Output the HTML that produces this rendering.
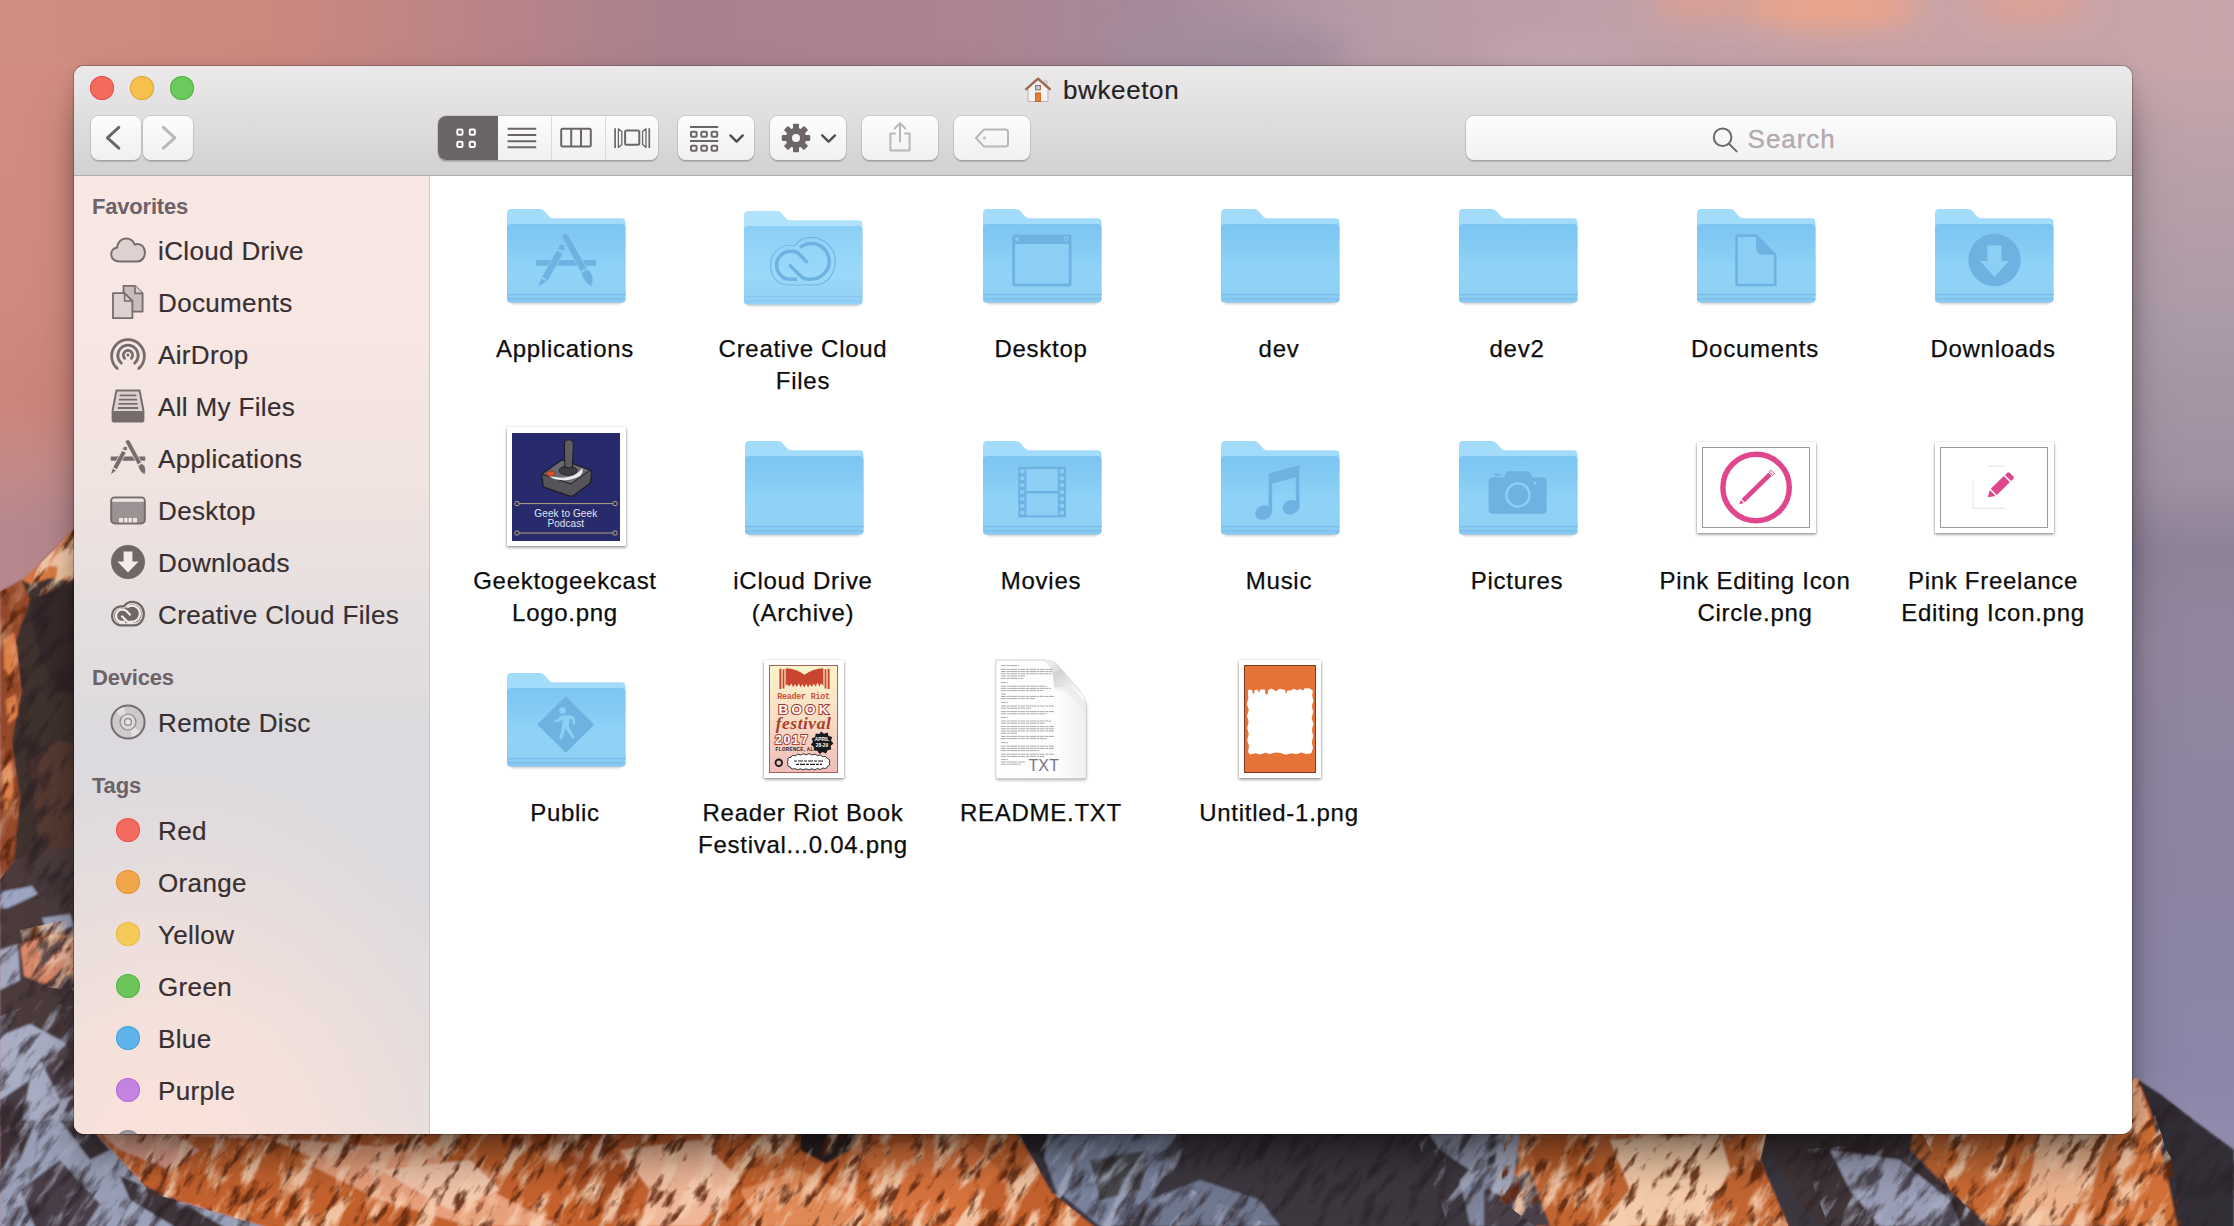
<!DOCTYPE html>
<html lang="en">
<head>
<meta charset="utf-8">
<title>bwkeeton</title>
<style>
html,body{margin:0;padding:0;}
body{width:2234px;height:1226px;overflow:hidden;position:relative;background:#b58a8e;font-family:"Liberation Sans",sans-serif;}
.wall{position:absolute;left:0;top:0;width:2234px;height:1226px;overflow:hidden;}
.win{position:absolute;left:74px;top:66px;width:2058px;height:1068px;border-radius:10px;overflow:hidden;box-shadow:0 0 0 1px rgba(0,0,0,.22),0 30px 42px -10px rgba(0,0,0,.5),0 4px 16px rgba(0,0,0,.14);background:#fff;}
.toolbar{position:absolute;left:0;top:0;width:2058px;height:109px;background:linear-gradient(#ebe9ea 0%,#e4e2e3 30%,#d2d0d2 100%);border-bottom:1px solid #aeabac;}
.sidebar{position:absolute;left:0;top:110px;width:355px;height:958px;border-right:1px solid #cdc8ca;background:radial-gradient(ellipse 340px 430px at 28% 106%,#fae2da 0%,rgba(250,226,218,.85) 35%,rgba(250,226,218,0) 100%),linear-gradient(180deg,#f9e7e3 0%,#f7e6e2 18%,#f0e3e0 33%,#e4dedf 47%,#dcdade 58%,#dcdade 72%,#e1dcdd 100%);overflow:hidden;}
.content{position:absolute;left:356px;top:110px;width:1702px;height:958px;background:#fff;overflow:hidden;}
.tl{position:absolute;top:10px;width:24px;height:24px;border-radius:50%;}
.title{position:absolute;left:950px;top:8.5px;height:30px;white-space:nowrap;}
.house{position:absolute;left:1px;top:2px;}
.ttext{-webkit-text-stroke:.2px #262224;position:absolute;left:39px;top:0;font-size:26px;line-height:30px;color:#262224;letter-spacing:.62px;}
.btn{position:absolute;top:50px;height:44px;border-radius:8px;background:linear-gradient(#fdfdfd,#f1f0f0);box-shadow:0 0 0 1px rgba(0,0,0,.09),0 1.5px 1px rgba(0,0,0,.16);}
.seg{position:absolute;top:50px;height:44px;border-radius:8px;background:linear-gradient(#fdfdfd,#f1f0f0);box-shadow:0 0 0 1px rgba(0,0,0,.09),0 1.5px 1px rgba(0,0,0,.16);overflow:hidden;}
.seg i{position:absolute;top:0;height:44px;display:block;}
.seg i.on{background:#6a6568;}
.seg i.dv{width:1px;background:#dcdadb;}
.search{position:absolute;left:1392px;top:50px;width:650px;height:44px;border-radius:8px;background:linear-gradient(#fcfcfc,#f3f2f2);box-shadow:0 0 0 1px rgba(0,0,0,.10),0 1.5px 1px rgba(0,0,0,.14);}
.stext{-webkit-text-stroke:.35px #b3aab0;position:absolute;left:281.6px;top:8.2px;font-size:26px;line-height:30px;color:#b3aab0;letter-spacing:.95px;}
.tbicons{position:absolute;left:0;top:0;}
.sh{position:absolute;left:18px;font-size:22px;line-height:26px;font-weight:bold;color:#6c6267;white-space:nowrap;letter-spacing:-.2px;}
.si{-webkit-text-stroke:.2px #372f32;position:absolute;left:84px;font-size:26px;line-height:30px;color:#372f32;white-space:nowrap;letter-spacing:.35px;}
.sic{position:absolute;left:36px;}
.dot{position:absolute;left:42px;width:24px;height:24px;border-radius:50%;display:block;}
.fi{position:absolute;}
.lb{-webkit-text-stroke:.25px #0c0c0c;position:absolute;width:260px;text-align:center;font-size:24px;line-height:32px;color:#0c0c0c;white-space:nowrap;letter-spacing:.72px;}
.th{position:absolute;background:#fff;box-shadow:0 0 0 .5px rgba(0,0,0,.12),0 1.5px 3px rgba(0,0,0,.42);}
.geek{position:absolute;left:4.8px;top:6px;width:108px;height:108px;background:#272a6b;overflow:hidden;}
.geek span{position:absolute;left:0;width:108px;text-align:center;color:#e2e5ef;font-size:10px;line-height:10px;letter-spacing:.1px;}
.geek .g1{top:76px}.geek .g2{top:86px}
.pinkin{position:absolute;left:4.6px;top:5.5px;width:106.4px;height:78.5px;border:1px solid #9a9a9a;background:#fff;overflow:hidden;}
.poster{position:absolute;left:5.5px;top:5.5px;width:67px;height:106px;border:1px solid #a8625a;background:linear-gradient(#fcf3cb,#f8e0c6 45%,#efbdbb);overflow:hidden;}
.poster span{position:absolute;white-space:nowrap;}
.poster .p1{left:0;width:67px;text-align:center;top:26.4px;font:bold 8.4px/10px "Liberation Mono",monospace;color:#c9553c;letter-spacing:-.25px;}
.poster .p2{left:0;width:67px;text-align:center;top:36.6px;font:bold 13.5px/14px "Liberation Sans",sans-serif;color:#fff;letter-spacing:3.2px;text-indent:3.2px;-webkit-text-stroke:2px #a3382a;paint-order:stroke fill;text-shadow:-1px 1.2px 0 #b8402e;}
.poster .p6{left:0;width:67px;text-align:center;top:48px;font:italic bold 17.5px/18px "Liberation Serif",serif;color:#a8402c;letter-spacing:.5px;}
.poster .p3{left:5px;top:68px;font:bold 12.5px/13px "Liberation Sans",sans-serif;color:#fff;letter-spacing:1.6px;-webkit-text-stroke:1.8px #a3382a;paint-order:stroke fill;text-shadow:-.8px 1px 0 #b8402e;}
.poster .p4{left:40.5px;width:23px;text-align:center;top:71.4px;font:bold 4.8px/5.8px "Liberation Sans",sans-serif;color:#fff;}
.poster .p5{left:5.6px;top:81.2px;font:bold 4.6px/6px "Liberation Sans",sans-serif;color:#1d1a1c;letter-spacing:.35px;}
.txtdoc{position:absolute;width:92px;height:119px;}
.txt{position:absolute;left:33.4px;top:97.2px;font-size:16px;line-height:18px;color:#77747f;letter-spacing:.2px;}
.orange{position:absolute;left:5px;top:5px;width:70.5px;height:106.5px;border:1px solid #7d3a1c;background:#e57338;overflow:hidden;}

</style>
</head>
<body>
<div class="wall">
<svg width="2234" height="1226" viewBox="0 0 2234 1226" style="position:absolute;left:0;top:0">
<defs>
<linearGradient id="skyx" x1="0" y1="0" x2="1" y2="0">
<stop offset="0" stop-color="#d28d81"/><stop offset=".12" stop-color="#cc887f"/><stop offset=".22" stop-color="#b98488"/><stop offset=".30" stop-color="#a9818e"/><stop offset=".42" stop-color="#ad8390"/><stop offset=".52" stop-color="#a58a9b"/><stop offset=".60" stop-color="#b59aa6"/><stop offset=".72" stop-color="#c0a0a8"/><stop offset=".86" stop-color="#c9a3a6"/><stop offset="1" stop-color="#c6a5aa"/>
</linearGradient>
<linearGradient id="lefty" x1="0" y1="0" x2="0" y2="1">
<stop offset="0" stop-color="#d28d81"/><stop offset=".2" stop-color="#d18a7d"/><stop offset=".29" stop-color="#cd857b"/><stop offset=".35" stop-color="#c38a88"/><stop offset=".4" stop-color="#b6888e"/><stop offset="1" stop-color="#b4868c"/>
</linearGradient>
<linearGradient id="righty" x1="0" y1="0" x2="0" y2="1">
<stop offset="0" stop-color="#c8a6aa"/><stop offset=".08" stop-color="#bba1a9"/><stop offset=".22" stop-color="#ac9ba8"/><stop offset=".36" stop-color="#9f90a2"/><stop offset=".42" stop-color="#8f8198"/><stop offset=".5" stop-color="#92869e"/><stop offset=".7" stop-color="#8d84a2"/><stop offset=".86" stop-color="#8b86a8"/><stop offset="1" stop-color="#9591b2"/>
</linearGradient>
<filter id="b1"><feGaussianBlur stdDeviation="1.2"/></filter>
<filter id="b14"><feGaussianBlur stdDeviation="14"/></filter>
<filter id="rock" x="0" y="0" width="100%" height="100%">
<feTurbulence type="fractalNoise" baseFrequency="0.07 0.03" numOctaves="4" seed="7" result="n"/>
<feColorMatrix in="n" type="matrix" values="0 0 0 0 0  0 0 0 0 0  0 0 0 0 0  4 0 0 0 -2.0" result="a"/>
<feFlood flood-color="#2c2126"/><feComposite in2="a" operator="in"/>
</filter>
<filter id="rockd" x="0" y="0" width="100%" height="100%">
<feTurbulence type="fractalNoise" baseFrequency="0.085 0.038" numOctaves="4" seed="11" result="n"/>
<feColorMatrix in="n" type="matrix" values="0 0 0 0 0  0 0 0 0 0  0 0 0 0 0  5 0 0 0 -2.75" result="a"/>
<feFlood flood-color="#5e2810"/><feComposite in2="a" operator="in"/>
</filter>
<filter id="rockl" x="0" y="0" width="100%" height="100%">
<feTurbulence type="fractalNoise" baseFrequency="0.055 0.024" numOctaves="4" seed="23" result="n"/>
<feColorMatrix in="n" type="matrix" values="0 0 0 0 0  0 0 0 0 0  0 0 0 0 0  0 4.2 0 0 -2.0" result="a"/>
<feFlood flood-color="#f7cfb0"/><feComposite in2="a" operator="in"/>
</filter>
<filter id="rocks" x="0" y="0" width="100%" height="100%">
<feTurbulence type="fractalNoise" baseFrequency="0.06 0.026" numOctaves="4" seed="41" result="n"/>
<feColorMatrix in="n" type="matrix" values="0 0 0 0 0  0 0 0 0 0  0 0 0 0 0  0 4 0 0 -2.1" result="a"/>
<feFlood flood-color="#a9afc4"/><feComposite in2="a" operator="in"/>
</filter>
<!-- orange-lit regions -->
<clipPath id="cl-or2"><path d="M0 592L22 580L30 600L16 640L22 690L12 740L20 800L14 860L0 880Z"/></clipPath>
<clipPath id="cl-or"><path d="M90 512L74 529L56 548L36 568L22 580L30 600L60 588L90 570ZM84 1120H1012L1052 1193L1100 1230H275L151 1193ZM1506 1120H1770L1760 1160L1790 1230H1540L1500 1200ZM1916 1120H2150L2172 1160L2182 1230H1990L1950 1190ZM2120 1092L2136 1077L2146 1088L2160 1130L2166 1150H2120ZM20 930L74 918V990L30 986Z"/></clipPath>
<!-- dark / snow regions -->
<clipPath id="cl-dk"><path d="M90 570L60 588L30 600L16 640L22 690L12 740L20 800L14 860L0 880V1230H275L151 1193L84 1120H90ZM1012 1120H1506L1500 1200L1540 1230H1100L1052 1193ZM1770 1120H1916L1950 1190L1990 1230H1790L1760 1160ZM2160 1130L2138 1080L2160 1094L2196 1122L2234 1150V1230H2182L2172 1160Z"/></clipPath>
<clipPath id="cl-snow"><path d="M0 1016L40 1000L90 1010V1120H84L151 1193L275 1230H0ZM1012 1120H1200L1170 1180L1280 1230H1100L1052 1193ZM1410 1120H1506L1500 1200L1540 1230H1450ZM1800 1150L1916 1140L1950 1190L1990 1230H1830Z"/></clipPath>
</defs>
<!-- sky: top strip -->
<rect x="0" y="0" width="2234" height="80" fill="url(#skyx)"/>
<g filter="url(#b14)"><ellipse cx="1830" cy="8" rx="90" ry="20" fill="#eea488"/><ellipse cx="1700" cy="4" rx="50" ry="12" fill="#e3a08c"/><ellipse cx="2030" cy="6" rx="60" ry="12" fill="#e5a08e"/><ellipse cx="1230" cy="50" rx="120" ry="24" fill="#a18c9e"/><ellipse cx="1560" cy="56" rx="80" ry="16" fill="#c3a6b0"/></g>
<rect x="0" y="60" width="90" height="1166" fill="url(#lefty)"/>
<rect x="2120" y="60" width="114" height="1166" fill="url(#righty)"/>
<!-- MOUNTAIN BASE SHAPES -->
<g filter="url(#b1)">
<!-- left mountain -->
<path d="M90 512L74 529L56 548L36 568L22 580L0 592V1230H90Z" fill="#40302f"/>
<path d="M90 512L74 529L56 548L36 568L22 580L30 584L50 578L70 580L90 570Z" fill="#d97a44"/>
<path d="M74 534L58 552L48 566L62 566L76 556Z" fill="#f6c6a2"/>
<path d="M0 592L22 580L30 600L16 640L22 690L12 740L20 800L14 860L0 880Z" fill="#96492a"/>
<path d="M4 640L14 632L18 660L10 676L4 668ZM6 700L16 694L18 716L8 724ZM2 770L12 760L14 800L4 812Z" fill="#dc7f48"/>
<path d="M30 600L60 588L90 576V700L60 690L40 660Z" fill="#37292c"/>
<path d="M30 760L60 740L90 750V870L40 860Z" fill="#553a33"/>
<path d="M0 880L14 860L40 850L90 846V1230H0Z" fill="#4b3a3e"/>
<path d="M0 892L32 886L38 894L8 908L0 908Z" fill="#9ea6c2"/>
<path d="M42 918L70 914L74 926L48 934Z" fill="#9aa0b8"/>
<path d="M20 944L50 934L74 936V972L44 984L24 976Z" fill="#d98a6c"/>
<path d="M36 946L66 940L70 958L44 966Z" fill="#efb4a2"/>
<path d="M0 950L18 944L20 980L0 990Z" fill="#a4a9c0"/>
<path d="M0 1036L30 1024L60 1040L90 1060V1120L50 1160L20 1226H0Z" fill="#a9aec4"/>
<path d="M40 1060L74 1040L90 1050V1090L60 1100Z" fill="#51424a"/>
<path d="M0 1100L30 1080L20 1130L0 1160Z" fill="#4a3d45"/>
<!-- bottom band -->
<path d="M84 1120H2150L2180 1230H275L151 1193Z" fill="#c4622f"/>
<path d="M0 1120H84L151 1193L275 1230H0Z" fill="#9aa0b8"/>
<path d="M0 1120H36L20 1160L0 1180Z" fill="#3f3339"/>
<path d="M60 1120H84L110 1150L90 1160Z" fill="#40343a"/>
<path d="M120 1176L170 1196L230 1230H180L130 1200Z" fill="#40343a"/>
<path d="M20 1190L60 1160L100 1204L84 1230H36Z" fill="#4a3e46"/>
<path d="M86 1120L150 1120L200 1150L170 1170L120 1150Z" fill="#dfa08e"/>
<path d="M150 1134L260 1134L340 1170L430 1190L410 1150L300 1140Z" fill="#efb294"/>
<path d="M300 1160L420 1140L470 1180L560 1226H470L380 1200Z" fill="#e9a07c"/>
<path d="M620 1150L700 1140L740 1180L700 1226H640L650 1190Z" fill="#f0b898"/>
<path d="M380 1170L470 1160L500 1190L450 1210Z" fill="#f2c4aa"/>
<path d="M520 1134L600 1134L640 1180L620 1226L580 1200L560 1160Z" fill="#a84e24"/>
<path d="M800 1120H866L850 1150L826 1164L800 1150Z" fill="#2b2024"/>
<path d="M860 1150L960 1134L1000 1170L960 1226H900L880 1190Z" fill="#d8733e"/>
<path d="M740 1190L800 1170L860 1200L880 1226H760Z" fill="#e08a58"/>
<path d="M1010 1120H2150L2180 1230H1098L1052 1193Z" fill="#3d393f"/>
<path d="M1030 1120H1190L1170 1160L1150 1200L1130 1226H1100L1056 1190Z" fill="#78829b"/>
<path d="M1010 1120H1050L1044 1160L1020 1140Z" fill="#2e2a30"/>
<path d="M1090 1160L1150 1150L1140 1190L1100 1200Z" fill="#4a4850"/>
<path d="M1150 1200L1200 1180L1260 1200L1280 1226H1140Z" fill="#70788f"/>
<path d="M1420 1120H1520L1500 1150L1470 1170L1440 1150Z" fill="#8c92a8"/>
<path d="M1460 1180L1500 1160L1520 1226H1470Z" fill="#7e8499"/>
<path d="M1506 1120H1770L1760 1160L1790 1230H1540L1500 1200L1520 1160Z" fill="#c26633"/>
<path d="M1610 1140L1720 1134L1730 1170L1700 1226H1600L1630 1190Z" fill="#f4cba8"/>
<path d="M1520 1140L1580 1134L1600 1170L1560 1190Z" fill="#b85c2c"/>
<path d="M1484 1190L1530 1170L1550 1226H1484Z" fill="#4a4048"/>
<path d="M1500 1134L1520 1134L1510 1200L1490 1190Z" fill="#a4a8bc"/>
<path d="M1760 1120H1924L1900 1150L1950 1190L1990 1226H1820L1790 1190Z" fill="#403639"/>
<path d="M1830 1150L1900 1160L1950 1200L1960 1226H1880L1850 1190Z" fill="#9a9eb6"/>
<path d="M1916 1120H2150L2170 1160L2180 1226H1990L1950 1190L1910 1150Z" fill="#c86a36"/>
<path d="M2040 1134L2110 1134L2090 1180L2060 1226H2010L2030 1180Z" fill="#eeb590"/>
<!-- right peak -->
<path d="M2120 1092L2136 1077L2146 1088L2160 1130L2176 1190L2184 1230H2120Z" fill="#d06f39"/>
<path d="M2138 1080L2160 1094L2196 1122L2234 1150V1230H2178L2166 1170L2150 1110Z" fill="#332d34"/>
<path d="M2124 1096L2140 1086L2150 1120L2130 1134Z" fill="#eaa880"/>
</g>
<!-- texture -->
<g clip-path="url(#cl-or)"><g transform="translate(0 500) skewX(-27)">
<rect x="0" y="0" width="2640" height="730" filter="url(#rockl)" opacity=".9"/>
<rect x="0" y="0" width="2640" height="730" filter="url(#rockd)" opacity=".85"/>
</g></g>
<g clip-path="url(#cl-or2)"><g transform="translate(0 500) skewX(-20)">
<rect x="0" y="0" width="300" height="400" filter="url(#rockl)" opacity=".3"/>
<rect x="0" y="0" width="300" height="400" filter="url(#rockd)" opacity=".9"/>
</g></g>
<g clip-path="url(#cl-snow)"><g transform="translate(0 500) skewX(-31)">
<rect x="0" y="0" width="2700" height="730" filter="url(#rocks)" opacity=".8"/>
</g></g>
<g clip-path="url(#cl-dk)"><g transform="translate(0 500) skewX(-31)">
<rect x="0" y="0" width="2700" height="730" filter="url(#rock)" opacity=".7"/>
</g></g>
</svg>

</div>
<div class="win">
<div class="toolbar">
<div class="tl" style="left:16px;background:#f46a5f;box-shadow:inset 0 0 0 1px #e2544a;"></div>
<div class="tl" style="left:56px;background:#f6c14f;box-shadow:inset 0 0 0 1px #e0a534;"></div>
<div class="tl" style="left:96px;background:#6cc95e;box-shadow:inset 0 0 0 1px #55b447;"></div>
<div class="title"><svg class="house" width="28" height="26" viewBox="0 0 28 26"><path d="M3 11.5 L3 24.5 L23 24.5 L23 11.5 L13 2.5 Z" fill="#f4f2f0" stroke="#b9b3ae" stroke-width="1"/><path d="M19 4 L22 4 L22 8 L19 6 Z" fill="#e4e2e2" stroke="#aaa" stroke-width=".6"/><path d="M1.2 12.2 L13 1.6 L24.8 12.2" fill="none" stroke="#9c6a50" stroke-width="2.4" stroke-linecap="round" stroke-linejoin="round"/><rect x="10.5" y="16" width="5" height="8.5" fill="#ea7a2c" stroke="#c05a18" stroke-width=".8"/><rect x="10.6" y="8.6" width="4.8" height="4.2" fill="#bcd2ea" stroke="#a0654a" stroke-width="1"/></svg><span class="ttext">bwkeeton</span></div>
<div class="btn" style="left:16.5px;width:50.5px;"></div>
<div class="btn" style="left:69px;width:49.5px;"></div>
<div class="seg" style="left:363.5px;width:220.5px;"><i class="on" style="left:0;width:60px;"></i><i class="dv" style="left:113px;"></i><i class="dv" style="left:167px;"></i></div>
<div class="btn" style="left:604px;width:76px;"></div>
<div class="btn" style="left:696px;width:76px;"></div>
<div class="btn" style="left:788px;width:76px;"></div>
<div class="btn" style="left:880px;width:76px;"></div>
<div class="search"><span class="stext">Search</span></div>
<svg class="tbicons" width="2058" height="110" viewBox="74 66 2058 110">
<!-- nav chevrons -->
<path d="M118.8 127.4 L107.4 137.8 L118.8 148.2" fill="none" stroke="#6c6669" stroke-width="3" stroke-linecap="round" stroke-linejoin="round"/>
<path d="M163.4 127.4 L174.8 137.8 L163.4 148.2" fill="none" stroke="#bcb8ba" stroke-width="3" stroke-linecap="round" stroke-linejoin="round"/>
<!-- icon view -->
<g fill="none" stroke="#fff" stroke-width="2">
<rect x="457.3" y="129.6" width="5.2" height="5.2" rx="1.2"/><rect x="469.7" y="129.6" width="5.2" height="5.2" rx="1.2"/>
<rect x="457.3" y="141.8" width="5.2" height="5.2" rx="1.2"/><rect x="469.7" y="141.8" width="5.2" height="5.2" rx="1.2"/>
</g>
<!-- list view -->
<g stroke="#6c6669" stroke-width="2">
<path d="M507.6 128.8H536.2M507.6 135.1H536.2M507.6 141.2H536.2M507.6 147.3H536.2"/>
</g>
<!-- column view -->
<g fill="none" stroke="#6c6669" stroke-width="2">
<rect x="561.2" y="128.8" width="29.6" height="17.8" rx="1.5"/><path d="M571.2 128.8V146.6M581 128.8V146.6"/>
</g>
<!-- cover flow -->
<g fill="none" stroke="#6c6669" stroke-width="2">
<rect x="625.1" y="130.6" width="14.2" height="14.2" rx="1.5"/>
<path d="M615.1 128.2V148M649.3 128.2V148" stroke-width="1.7"/>
<path d="M618.4 128.8V147.4L621.8 144.6V131.6ZM646 128.8V147.4L642.6 144.6V131.6Z" stroke-width="1.3" stroke-linejoin="round"/>
</g>
<!-- arrange -->
<g fill="none" stroke="#6c6669" stroke-width="2">
<path d="M690 127H718.2M690 141H718.2" stroke-width="1.8"/>
<rect x="691" y="131.8" width="5.6" height="5" rx="1"/><rect x="701.3" y="131.8" width="5.6" height="5" rx="1"/><rect x="711.6" y="131.8" width="5.6" height="5" rx="1"/>
<rect x="691" y="145.8" width="5.6" height="5" rx="1"/><rect x="701.3" y="145.8" width="5.6" height="5" rx="1"/><rect x="711.6" y="145.8" width="5.6" height="5" rx="1"/>
<path d="M730.4 135.4L736.6 141.6L742.8 135.4" stroke="#514c4f" stroke-width="2.4" stroke-linecap="round" stroke-linejoin="round"/>
</g>
<!-- gear -->
<g transform="translate(796 138)" fill="#6c6669">
<g id="teeth"><rect x="-3" y="-14.2" width="6" height="28.4" rx="1"/><rect x="-3" y="-14.2" width="6" height="28.4" rx="1" transform="rotate(45)"/><rect x="-3" y="-14.2" width="6" height="28.4" rx="1" transform="rotate(90)"/><rect x="-3" y="-14.2" width="6" height="28.4" rx="1" transform="rotate(135)"/></g>
<circle r="10.2"/><circle r="4" fill="#f6f6f6"/>
</g>
<path d="M822.2 135.4L828.6 141.6L835 135.4" fill="none" stroke="#514c4f" stroke-width="2.4" stroke-linecap="round" stroke-linejoin="round"/>
<!-- share -->
<g fill="none" stroke="#bab6b8" stroke-width="2" stroke-linejoin="round" stroke-linecap="round">
<path d="M895 133.4H890.4V150.4H909.6V133.4H905"/>
<path d="M900 141.6V123.4M894.6 128.6L900 123.2L905.4 128.6"/>
</g>
<!-- tag -->
<g fill="none" stroke="#bab6b8" stroke-width="2" stroke-linejoin="round">
<path d="M976 138L984 129.4H1005.4Q1008 129.4 1008 132V144Q1008 146.6 1005.4 146.6H984Z"/>
<circle cx="984.4" cy="138" r="1.4" fill="#bab6b8" stroke="none"/>
</g>
<!-- search glass -->
<g fill="none" stroke="#6f696c" stroke-width="2">
<circle cx="1722.6" cy="137.2" r="8.8"/><path d="M1729 143.8L1736.6 151.4" stroke-linecap="round"/>
</g>
</svg>

</div>
<div class="sidebar">
<div class="sh" style="top:17.6px">Favorites</div>
<div class="si" style="top:59.7px">iCloud Drive</div>
<svg class="sic" style="top:56.0px" width="36" height="36" viewBox="0 0 36 36"><path d="M9.5 29.5C4.6 29.5 1.2 26.4 1.2 22.3C1.2 18.7 3.7 16 7.2 15.5C7.4 10.6 11 6.6 16 6.6C20.2 6.6 23.4 9.2 24.8 12.6C25.7 12.2 26.7 12 27.6 12C31.9 12 34.9 15.6 34.9 20.6C34.9 25.8 31.6 29.5 27.4 29.5Z" fill="#ddd2d0" stroke="#766c6d" stroke-width="2" stroke-linejoin="round"/></svg>
<div class="si" style="top:111.7px">Documents</div>
<svg class="sic" style="top:108.0px" width="36" height="36" viewBox="0 0 36 36"><path d="M13.5 1.8H25L32.6 9.4V27.6H13.5Z" fill="#c9bcbd" stroke="#766c6d" stroke-width="1.8" stroke-linejoin="round"/><path d="M25 1.8V9.4H32.6" fill="#ddd2d0" stroke="#766c6d" stroke-width="1.6" stroke-linejoin="round"/><path d="M3 9.2H14.6L22.4 17V34.2H3Z" fill="#ddd2d0" stroke="#766c6d" stroke-width="1.8" stroke-linejoin="round"/><path d="M14.6 9.2V17H22.4" fill="none" stroke="#766c6d" stroke-width="1.6" stroke-linejoin="round"/></svg>
<div class="si" style="top:163.7px">AirDrop</div>
<svg class="sic" style="top:160.0px" width="36" height="36" viewBox="0 0 36 36"><g fill="none" stroke="#766c6d" stroke-width="2.8" stroke-linecap="round"><path d="M7.2 32.4A16.4 16.4 0 1 1 28.8 32.4"/><path d="M11.4 27.2A10.2 10.2 0 1 1 24.6 27.2"/><path d="M14.6 22.2A4.6 4.6 0 1 1 21.4 22.2"/></g><circle cx="18" cy="19" r="1.6" fill="#766c6d"/></svg>
<div class="si" style="top:215.7px">All My Files</div>
<svg class="sic" style="top:212.0px" width="36" height="36" viewBox="0 0 36 36"><path d="M6.4 2.6H29.6L33.4 22.4V31.4Q33.4 33.6 31.2 33.6H4.8Q2.6 33.6 2.6 31.4V22.4Z" fill="#ddd2d0" stroke="#766c6d" stroke-width="2" stroke-linejoin="round"/><path d="M2.6 23H33.4V31.4Q33.4 33.6 31.2 33.6H4.8Q2.6 33.6 2.6 31.4Z" fill="#766c6d"/><path d="M9.6 7.4H26.4M9 11.6H27M8.4 15.8H27.6M7.8 20H28.2" stroke="#766c6d" stroke-width="1.8"/></svg>
<div class="si" style="top:267.7px">Applications</div>
<svg class="sic" style="top:264.0px" width="36" height="36" viewBox="0 0 36 36"><g fill="#766c6d" stroke="#f1e4e1" stroke-width=".8"><path d="M0.8 16.6H35.2V20.8H0.8Z" stroke="none"/><path d="M15.6 2.6Q15 0.6 17 -0.2Q19 -0.8 20 1L31.6 22.6L27.6 24.8Z"/><path d="M28 25.6L32 23.4Q34.8 25 35.6 28.4Q36 31.6 34.6 34.8Q30.8 32.8 29.4 29.6Q28.2 27.4 28 25.6Z"/><path d="M12.4 9.6L13.2 7.8Q14.2 5.6 16.2 6.4Q18 7.4 17.2 9.4L16.6 11Z"/><path d="M12 10.4L16.2 12.6L7 29.6L2.8 27.4Z"/><path d="M2.4 28.2L6.6 30.4L0.4 35Z"/></g></svg>
<div class="si" style="top:319.7px">Desktop</div>
<svg class="sic" style="top:316.0px" width="36" height="36" viewBox="0 0 36 36"><rect x="1.2" y="5.4" width="33.6" height="26" rx="3.4" fill="#9c9294" stroke="#766c6d" stroke-width="2"/><path d="M2.2 9.8V8.6Q2.2 6.4 4.4 6.4H31.6Q33.8 6.4 33.8 8.6V9.8Z" fill="#efe6e4"/><path d="M9 26H27V30.4H9Z" fill="#efe6e4"/><path d="M13.6 26V30.4M18 26V30.4M22.4 26V30.4" stroke="#9c9294" stroke-width="1.2"/></svg>
<div class="si" style="top:371.7px">Downloads</div>
<svg class="sic" style="top:368.0px" width="36" height="36" viewBox="0 0 36 36"><circle cx="18" cy="18" r="17" fill="#6f6667"/><path d="M13.6 7.4H22.4V17.4H28.6L18 28.6L7.4 17.4H13.6Z" fill="#f4ecea"/></svg>
<div class="si" style="top:423.7px">Creative Cloud Files</div>
<svg class="sic" style="top:420.0px" width="36" height="36" viewBox="0 0 36 36"><path d="M10.8 30.4C5.4 30.4 1 25.8 1 19.8C1 13.8 5.6 9.2 11.2 9.2H13.4C15.4 6.4 18.6 4.8 22.2 4.8C29.4 4.8 35 10.4 35 17.4C35 24.6 30.4 30.4 24.4 30.4Z" fill="#6f6667"/><path d="M11.2 27.6C6.8 27.6 3.6 24 3.6 19.8C3.6 15.4 7 12 11.4 12H14.8C16.4 9.2 19 7.6 22.2 7.6C27.8 7.6 32.2 12 32.2 17.4C32.2 23 28.6 27.6 24 27.6Z" fill="none" stroke="#ece3e1" stroke-width="1.1"/><g fill="none" stroke="#f3ebe9" stroke-width="2.3"><path d="M20.6 19.2L16.2 14.8Q15 13.6 13 13.6H12C8.6 13.6 6 16.4 6 19.8C6 23.2 8.6 26 12 26H15"/><path d="M11.4 19.8L17 25.4Q18 26 20.4 26H21.4C26.2 26 30 22.2 30 17.6C30 13 26.4 9.6 22 9.6C20 9.6 18.2 10.2 16.8 11.4"/></g></svg>
<div class="sh" style="top:488.8px">Devices</div>
<div class="si" style="top:531.7px">Remote Disc</div>
<svg class="sic" style="top:528.0px" width="36" height="36" viewBox="0 0 36 36"><circle cx="18" cy="18" r="16.6" fill="#cfc9ca" stroke="#766c6d" stroke-width="2"/><path d="M18 18L6 8A15.6 15.6 0 0 1 14 3Z" fill="#e9e5e5" opacity=".8"/><path d="M18 18L30 28A15.6 15.6 0 0 1 22 33Z" fill="#e9e5e5" opacity=".8"/><circle cx="18" cy="18" r="8" fill="#dcd7d8" stroke="#8d8586" stroke-width="1.2"/><circle cx="18" cy="18" r="3.4" fill="#e8e4e4" stroke="#8d8586" stroke-width="1.2"/></svg>
<div class="sh" style="top:597.0px">Tags</div>
<div class="si" style="top:639.7px">Red</div>
<i class="dot" style="top:642.0px;background:#f36b60;box-shadow:inset 0 0 0 1px #e8574c;"></i>
<div class="si" style="top:691.7px">Orange</div>
<i class="dot" style="top:694.0px;background:#f1a64a;box-shadow:inset 0 0 0 1px #e0913a;"></i>
<div class="si" style="top:743.7px">Yellow</div>
<i class="dot" style="top:746.0px;background:#f6ca59;box-shadow:inset 0 0 0 1px #e8b945;"></i>
<div class="si" style="top:795.7px">Green</div>
<i class="dot" style="top:798.0px;background:#6cc55a;box-shadow:inset 0 0 0 1px #5bb44a;"></i>
<div class="si" style="top:847.7px">Blue</div>
<i class="dot" style="top:850.0px;background:#5eb3ea;box-shadow:inset 0 0 0 1px #4ea3dc;"></i>
<div class="si" style="top:899.7px">Purple</div>
<i class="dot" style="top:902.0px;background:#c583e0;box-shadow:inset 0 0 0 1px #b672d2;"></i>
<div class="si" style="top:951.7px">Gray</div>
<i class="dot" style="top:954.0px;background:#a09a9e;box-shadow:inset 0 0 0 1px #8f898d;"></i>

</div>
<div class="content">
<svg width="0" height="0" style="position:absolute"><defs>
<linearGradient id="ff" x1="0" y1="0" x2="0" y2="1"><stop offset="0" stop-color="#7bc5f1"/><stop offset=".12" stop-color="#7fc8f2"/><stop offset=".6" stop-color="#8fd3f7"/><stop offset=".86" stop-color="#8ed1f5"/><stop offset="1" stop-color="#86c8ef"/></linearGradient>
<linearGradient id="fl" x1="0" y1="0" x2="0" y2="1"><stop offset="0" stop-color="#8ccff5"/><stop offset=".6" stop-color="#9bd9f9"/><stop offset="1" stop-color="#92d0f4"/></linearGradient>
<filter id="fsh" x="-10%" y="-10%" width="120%" height="130%"><feGaussianBlur stdDeviation="1.4"/></filter>
</defs></svg>
<svg class="fi" style="left:73.0px;top:30.0px" width="127" height="104" viewBox="-4 -3 127 104"><rect x="3" y="84" width="112.5" height="10.5" rx="3" fill="#5c6b78" opacity=".45" filter="url(#fsh)"/><path d="M0 4.4Q0 0 4.4 0H32.6Q35.6 0 37.6 2.3L41.6 7Q43.6 9.3 46.6 9.3H114.1Q118.5 9.3 118.5 13.7V88H0Z" fill="#a3dcfa"/><path d="M0 19.2Q0 15 4.2 15H114.3Q118.5 15 118.5 19.2V90.3Q118.5 93.5 115.3 93.5H3.2Q0 93.5 0 90.3Z" fill="url(#ff)"/><path d="M0 85.6H118.5M0 89.9H118.5" stroke="#79bdea" stroke-width="1.3" fill="none"/><g fill="#6eb2e2" stroke="#88ccf4" stroke-width=".9"><rect x="29.1" y="51.1" width="60" height="5.7" stroke="none"/><path d="M55.3 28.9Q54.3 26 57.2 24.8Q60.2 23.8 61.8 26.4L79.8 59.2L73.6 62.6Z"/><path d="M74.2 63.6L80.4 60.2Q84.4 62.4 85.8 67.6Q86.6 72.6 84.4 77.4Q78.6 74.4 76.4 69.6Q74.6 66.4 74.2 63.6Z"/><path d="M50.4 40.2L51.6 37.4Q53 34 56 35.2Q58.8 36.6 57.6 39.6L56.6 42.2Z"/><path d="M49.8 41.2L56 44.6L41 71.4L34.8 68Z"/><path d="M34.2 69.2L40.4 72.6L31 77.4Z"/></g></svg>
<svg class="fi" style="left:309.8px;top:31.7px" width="127" height="104" viewBox="-4 -3 127 104"><rect x="3" y="84" width="112.5" height="10.5" rx="3" fill="#5c6b78" opacity=".45" filter="url(#fsh)"/><path d="M0 4.4Q0 0 4.4 0H32.6Q35.6 0 37.6 2.3L41.6 7Q43.6 9.3 46.6 9.3H114.1Q118.5 9.3 118.5 13.7V88H0Z" fill="#b0e3fb"/><path d="M0 19.2Q0 15 4.2 15H114.3Q118.5 15 118.5 19.2V90.3Q118.5 93.5 115.3 93.5H3.2Q0 93.5 0 90.3Z" fill="url(#fl)"/><path d="M0 85.6H118.5M0 89.9H118.5" stroke="#86c6ef" stroke-width="1.3" fill="none"/><g fill="none" stroke="#6eb2e2" stroke-linecap="butt"><path d="M42.9 74C33.8 74 26.6 65.2 26.6 54.3C26.6 43.4 34.5 34.5 44.5 34.5H50.9C54.5 29.4 60.4 26.4 66.9 26.4C80.5 26.4 91.2 36.8 91.2 50C91.2 63.2 82.5 74 71.5 74Z" stroke-width="1.2" opacity=".85"/><path d="M63.5 51.7L54.8 42.8Q52.3 40.3 48.3 40.3H46.3C38.7 40.3 32.6 46.5 32.6 54.3C32.6 62 38.7 68.3 46.3 68.3H53.2" stroke-width="3.5"/><path d="M45.2 53.7L56.3 64.8Q59.8 68.3 65 68.3H66.5C76.8 68.3 85.2 60.3 85.2 50.4C85.2 40.5 77.4 32.6 67.6 32.6C63.2 32.6 59.2 34 56 36.6" stroke-width="3.5"/></g></svg>
<svg class="fi" style="left:549.0px;top:30.0px" width="127" height="104" viewBox="-4 -3 127 104"><rect x="3" y="84" width="112.5" height="10.5" rx="3" fill="#5c6b78" opacity=".45" filter="url(#fsh)"/><path d="M0 4.4Q0 0 4.4 0H32.6Q35.6 0 37.6 2.3L41.6 7Q43.6 9.3 46.6 9.3H114.1Q118.5 9.3 118.5 13.7V88H0Z" fill="#a3dcfa"/><path d="M0 19.2Q0 15 4.2 15H114.3Q118.5 15 118.5 19.2V90.3Q118.5 93.5 115.3 93.5H3.2Q0 93.5 0 90.3Z" fill="url(#ff)"/><path d="M0 85.6H118.5M0 89.9H118.5" stroke="#79bdea" stroke-width="1.3" fill="none"/><rect x="29.2" y="25.6" width="59.4" height="52" rx="3" fill="#6eb2e2"/><rect x="32" y="35" width="53.8" height="39.8" rx="1" fill="#8bcff5"/><circle cx="34" cy="30.2" r="1.8" fill="#8bcff5"/><circle cx="83" cy="29.6" r="2" fill="none" stroke="#8bcff5" stroke-width="1"/></svg>
<svg class="fi" style="left:787.0px;top:30.0px" width="127" height="104" viewBox="-4 -3 127 104"><rect x="3" y="84" width="112.5" height="10.5" rx="3" fill="#5c6b78" opacity=".45" filter="url(#fsh)"/><path d="M0 4.4Q0 0 4.4 0H32.6Q35.6 0 37.6 2.3L41.6 7Q43.6 9.3 46.6 9.3H114.1Q118.5 9.3 118.5 13.7V88H0Z" fill="#a3dcfa"/><path d="M0 19.2Q0 15 4.2 15H114.3Q118.5 15 118.5 19.2V90.3Q118.5 93.5 115.3 93.5H3.2Q0 93.5 0 90.3Z" fill="url(#ff)"/><path d="M0 85.6H118.5M0 89.9H118.5" stroke="#79bdea" stroke-width="1.3" fill="none"/></svg>
<svg class="fi" style="left:1025.0px;top:30.0px" width="127" height="104" viewBox="-4 -3 127 104"><rect x="3" y="84" width="112.5" height="10.5" rx="3" fill="#5c6b78" opacity=".45" filter="url(#fsh)"/><path d="M0 4.4Q0 0 4.4 0H32.6Q35.6 0 37.6 2.3L41.6 7Q43.6 9.3 46.6 9.3H114.1Q118.5 9.3 118.5 13.7V88H0Z" fill="#a3dcfa"/><path d="M0 19.2Q0 15 4.2 15H114.3Q118.5 15 118.5 19.2V90.3Q118.5 93.5 115.3 93.5H3.2Q0 93.5 0 90.3Z" fill="url(#ff)"/><path d="M0 85.6H118.5M0 89.9H118.5" stroke="#79bdea" stroke-width="1.3" fill="none"/></svg>
<svg class="fi" style="left:1263.0px;top:30.0px" width="127" height="104" viewBox="-4 -3 127 104"><rect x="3" y="84" width="112.5" height="10.5" rx="3" fill="#5c6b78" opacity=".45" filter="url(#fsh)"/><path d="M0 4.4Q0 0 4.4 0H32.6Q35.6 0 37.6 2.3L41.6 7Q43.6 9.3 46.6 9.3H114.1Q118.5 9.3 118.5 13.7V88H0Z" fill="#a3dcfa"/><path d="M0 19.2Q0 15 4.2 15H114.3Q118.5 15 118.5 19.2V90.3Q118.5 93.5 115.3 93.5H3.2Q0 93.5 0 90.3Z" fill="url(#ff)"/><path d="M0 85.6H118.5M0 89.9H118.5" stroke="#79bdea" stroke-width="1.3" fill="none"/><path d="M39.6 26.6H59L78.2 45.8V76H39.6Z" fill="#8bcff5" stroke="#6eb2e2" stroke-width="2.6"/><path d="M59 26.6V38Q59 45.8 66.8 45.8H78.2Z" fill="#6eb2e2"/></svg>
<svg class="fi" style="left:1501.0px;top:30.0px" width="127" height="104" viewBox="-4 -3 127 104"><rect x="3" y="84" width="112.5" height="10.5" rx="3" fill="#5c6b78" opacity=".45" filter="url(#fsh)"/><path d="M0 4.4Q0 0 4.4 0H32.6Q35.6 0 37.6 2.3L41.6 7Q43.6 9.3 46.6 9.3H114.1Q118.5 9.3 118.5 13.7V88H0Z" fill="#a3dcfa"/><path d="M0 19.2Q0 15 4.2 15H114.3Q118.5 15 118.5 19.2V90.3Q118.5 93.5 115.3 93.5H3.2Q0 93.5 0 90.3Z" fill="url(#ff)"/><path d="M0 85.6H118.5M0 89.9H118.5" stroke="#79bdea" stroke-width="1.3" fill="none"/><circle cx="59.5" cy="51" r="26.2" fill="#6eb2e2"/><path d="M52.4 36.6H66.6V52H74L59.5 68L45 52H52.4Z" fill="#8bcff5"/></svg>
<div class="lb" style="left:5.0px;top:157.0px">Applications</div>
<div class="lb" style="left:243.0px;top:157.0px">Creative Cloud<br>Files</div>
<div class="lb" style="left:481.0px;top:157.0px">Desktop</div>
<div class="lb" style="left:719.0px;top:157.0px">dev</div>
<div class="lb" style="left:957.0px;top:157.0px">dev2</div>
<div class="lb" style="left:1195.0px;top:157.0px">Documents</div>
<div class="lb" style="left:1433.0px;top:157.0px">Downloads</div>
<svg class="fi" style="left:311.0px;top:262.0px" width="127" height="104" viewBox="-4 -3 127 104"><rect x="3" y="84" width="112.5" height="10.5" rx="3" fill="#5c6b78" opacity=".45" filter="url(#fsh)"/><path d="M0 4.4Q0 0 4.4 0H32.6Q35.6 0 37.6 2.3L41.6 7Q43.6 9.3 46.6 9.3H114.1Q118.5 9.3 118.5 13.7V88H0Z" fill="#a3dcfa"/><path d="M0 19.2Q0 15 4.2 15H114.3Q118.5 15 118.5 19.2V90.3Q118.5 93.5 115.3 93.5H3.2Q0 93.5 0 90.3Z" fill="url(#ff)"/><path d="M0 85.6H118.5M0 89.9H118.5" stroke="#79bdea" stroke-width="1.3" fill="none"/></svg>
<svg class="fi" style="left:549.0px;top:262.0px" width="127" height="104" viewBox="-4 -3 127 104"><rect x="3" y="84" width="112.5" height="10.5" rx="3" fill="#5c6b78" opacity=".45" filter="url(#fsh)"/><path d="M0 4.4Q0 0 4.4 0H32.6Q35.6 0 37.6 2.3L41.6 7Q43.6 9.3 46.6 9.3H114.1Q118.5 9.3 118.5 13.7V88H0Z" fill="#a3dcfa"/><path d="M0 19.2Q0 15 4.2 15H114.3Q118.5 15 118.5 19.2V90.3Q118.5 93.5 115.3 93.5H3.2Q0 93.5 0 90.3Z" fill="url(#ff)"/><path d="M0 85.6H118.5M0 89.9H118.5" stroke="#79bdea" stroke-width="1.3" fill="none"/><rect x="35.2" y="25.8" width="47.8" height="50.6" fill="#6eb2e2"/><rect x="43.4" y="28" width="31.4" height="22" fill="#8bcff5"/><rect x="43.4" y="52.4" width="31.4" height="22" fill="#8bcff5"/><rect x="37.2" y="28.6" width="4.2" height="3.6" rx="1" fill="#8bcff5"/><rect x="76.8" y="28.6" width="4.2" height="3.6" rx="1" fill="#8bcff5"/><rect x="37.2" y="35.5" width="4.2" height="3.6" rx="1" fill="#8bcff5"/><rect x="76.8" y="35.5" width="4.2" height="3.6" rx="1" fill="#8bcff5"/><rect x="37.2" y="42.4" width="4.2" height="3.6" rx="1" fill="#8bcff5"/><rect x="76.8" y="42.4" width="4.2" height="3.6" rx="1" fill="#8bcff5"/><rect x="37.2" y="49.3" width="4.2" height="3.6" rx="1" fill="#8bcff5"/><rect x="76.8" y="49.3" width="4.2" height="3.6" rx="1" fill="#8bcff5"/><rect x="37.2" y="56.2" width="4.2" height="3.6" rx="1" fill="#8bcff5"/><rect x="76.8" y="56.2" width="4.2" height="3.6" rx="1" fill="#8bcff5"/><rect x="37.2" y="63.1" width="4.2" height="3.6" rx="1" fill="#8bcff5"/><rect x="76.8" y="63.1" width="4.2" height="3.6" rx="1" fill="#8bcff5"/><rect x="37.2" y="70.0" width="4.2" height="3.6" rx="1" fill="#8bcff5"/><rect x="76.8" y="70.0" width="4.2" height="3.6" rx="1" fill="#8bcff5"/></svg>
<svg class="fi" style="left:787.0px;top:262.0px" width="127" height="104" viewBox="-4 -3 127 104"><rect x="3" y="84" width="112.5" height="10.5" rx="3" fill="#5c6b78" opacity=".45" filter="url(#fsh)"/><path d="M0 4.4Q0 0 4.4 0H32.6Q35.6 0 37.6 2.3L41.6 7Q43.6 9.3 46.6 9.3H114.1Q118.5 9.3 118.5 13.7V88H0Z" fill="#a3dcfa"/><path d="M0 19.2Q0 15 4.2 15H114.3Q118.5 15 118.5 19.2V90.3Q118.5 93.5 115.3 93.5H3.2Q0 93.5 0 90.3Z" fill="url(#ff)"/><path d="M0 85.6H118.5M0 89.9H118.5" stroke="#79bdea" stroke-width="1.3" fill="none"/><g fill="#6eb2e2"><path d="M47.6 32.4L78.4 24.2V66.6H74.8V36.2L51.2 42.4V72H47.6Z"/><ellipse cx="42.6" cy="71.6" rx="8.6" ry="7" transform="rotate(-20 42.6 71.6)"/><ellipse cx="70" cy="66.2" rx="8.6" ry="7" transform="rotate(-20 70 66.2)"/></g></svg>
<svg class="fi" style="left:1025.0px;top:262.0px" width="127" height="104" viewBox="-4 -3 127 104"><rect x="3" y="84" width="112.5" height="10.5" rx="3" fill="#5c6b78" opacity=".45" filter="url(#fsh)"/><path d="M0 4.4Q0 0 4.4 0H32.6Q35.6 0 37.6 2.3L41.6 7Q43.6 9.3 46.6 9.3H114.1Q118.5 9.3 118.5 13.7V88H0Z" fill="#a3dcfa"/><path d="M0 19.2Q0 15 4.2 15H114.3Q118.5 15 118.5 19.2V90.3Q118.5 93.5 115.3 93.5H3.2Q0 93.5 0 90.3Z" fill="url(#ff)"/><path d="M0 85.6H118.5M0 89.9H118.5" stroke="#79bdea" stroke-width="1.3" fill="none"/><path d="M33.6 36.2H44.6L48 30.2H70L73.6 36.2H83.6Q87.6 36.2 87.6 40.2V68.8Q87.6 72.8 83.6 72.8H33.6Q29.6 72.8 29.6 68.8V40.2Q29.6 36.2 33.6 36.2Z" fill="#6eb2e2"/><rect x="35.6" y="32.6" width="6" height="2.4" rx="1" fill="#6eb2e2"/><circle cx="59" cy="54" r="11.6" fill="none" stroke="#8bcff5" stroke-width="2.4"/><circle cx="76" cy="42" r="1.6" fill="#8bcff5"/></svg>
<div class="lb" style="left:5.0px;top:389.0px">Geektogeekcast<br>Logo.png</div>
<div class="lb" style="left:243.0px;top:389.0px">iCloud Drive<br>(Archive)</div>
<div class="lb" style="left:481.0px;top:389.0px">Movies</div>
<div class="lb" style="left:719.0px;top:389.0px">Music</div>
<div class="lb" style="left:957.0px;top:389.0px">Pictures</div>
<div class="lb" style="left:1195.0px;top:389.0px">Pink Editing Icon<br>Circle.png</div>
<div class="lb" style="left:1433.0px;top:389.0px">Pink Freelance<br>Editing Icon.png</div>
<svg class="fi" style="left:73.0px;top:494.0px" width="127" height="104" viewBox="-4 -3 127 104"><rect x="3" y="84" width="112.5" height="10.5" rx="3" fill="#5c6b78" opacity=".45" filter="url(#fsh)"/><path d="M0 4.4Q0 0 4.4 0H32.6Q35.6 0 37.6 2.3L41.6 7Q43.6 9.3 46.6 9.3H114.1Q118.5 9.3 118.5 13.7V88H0Z" fill="#a3dcfa"/><path d="M0 19.2Q0 15 4.2 15H114.3Q118.5 15 118.5 19.2V90.3Q118.5 93.5 115.3 93.5H3.2Q0 93.5 0 90.3Z" fill="url(#ff)"/><path d="M0 85.6H118.5M0 89.9H118.5" stroke="#79bdea" stroke-width="1.3" fill="none"/><path d="M58.8 24.4L85.8 51.5L58.8 78.6L31.8 51.5Z" fill="#6eb2e2" stroke="#6eb2e2" stroke-width="2" stroke-linejoin="round"/><g fill="#8bcff5"><circle cx="55.6" cy="37.6" r="3.4"/><path d="M54 42.6L60.6 42L66.2 43.6Q67.4 44.2 67.6 45.4L68.2 51.4L66 51.6L65.2 46.4L62.6 45.8L61.6 53.4L68 64.6L65.6 66L58.4 55.6L55 66.4L52.2 65.6L55.2 53.4L55.6 46.4L52 48.8L47.4 48.8L47.2 46.8L51.2 46.4Z"/></g></svg>
<div class="lb" style="left:5.0px;top:621.0px">Public</div>
<div class="lb" style="left:243.0px;top:621.0px">Reader Riot Book<br>Festival...0.04.png</div>
<div class="lb" style="left:481.0px;top:621.0px">README.TXT</div>
<div class="lb" style="left:719.0px;top:621.0px">Untitled-1.png</div>
<!-- thumbnails: positioned in content coords (page - 430,176) -->
<div class="th" style="left:77px;top:251px;width:118.5px;height:119px;"><div class="geek">
<svg width="108" height="108" viewBox="0 0 108 108" style="position:absolute;left:0;top:0">
<path d="M30 41L50 27L78 37Q80 38 79.6 40.4L78.6 48.6Q78.2 50.6 76.6 51.6L61.6 62.6Q59.6 63.6 57.6 63L33 54.6Q31.2 53.8 31 51.8L29.8 43Q29.6 41.6 30 41Z" fill="#55545a" stroke="#1b1b22" stroke-width="1.2"/>
<path d="M30 41L50 27L78 37L59 51Z" fill="#6a6970" stroke="#1b1b22" stroke-width="1"/>
<path d="M36 42Q46 46 56 44Q66 42 70 35Q72 39 68 43Q60 48 48 47Q40 46.6 36 42Z" fill="#e9e9ee"/>
<ellipse cx="56" cy="37.6" rx="9" ry="4.6" fill="#3d3c43" stroke="#1b1b22" stroke-width=".8"/>
<path d="M52.4 10.6Q52.4 7 56.6 6.8Q61.4 6.8 61.4 10.6L60.4 34Q56.6 36 52.8 34Z" fill="#5d5c63" stroke="#1b1b22" stroke-width="1"/>
<ellipse cx="38.6" cy="40.6" rx="4.2" ry="2.6" fill="#d2552b" stroke="#7a2a12" stroke-width=".7"/>
<path d="M5 70.6H103M5 100H103" stroke="#b3a17c" stroke-width="1"/>
<g fill="#272a6b" stroke="#b3a17c" stroke-width="1"><rect x="3" y="68.6" width="4" height="4" rx="1"/><rect x="101" y="68.6" width="4" height="4" rx="1"/><rect x="3" y="98" width="4" height="4" rx="1"/><rect x="101" y="98" width="4" height="4" rx="1"/></g>
</svg>
<span class="g1">Geek to Geek</span><span class="g2">Podcast</span></div></div>

<div class="th" style="left:1267px;top:265.5px;width:118.5px;height:91.5px;"><div class="pinkin">
<svg width="107" height="80" viewBox="0 0 107 80" style="position:absolute;left:0;top:0">
<g transform="translate(-.7 -.7)"><circle cx="53.8" cy="40.2" r="33.2" fill="none" stroke="#e0468c" stroke-width="5.4"/>
<path d="M39.2 51.6L66 25.4L69.4 28.8L42.6 55Z" fill="#e0468c"/><path d="M38.6 52.6L41.6 55.6L37 57Z" fill="#e0468c"/><path d="M66.8 24.6L68.6 22.8L72 26.2L70.2 28Z" fill="#fff" stroke="#e0468c" stroke-width="1"/></g>
</svg></div></div>

<div class="th" style="left:1505px;top:265.5px;width:118.5px;height:91.5px;"><div class="pinkin">
<svg width="107" height="80" viewBox="0 0 107 80" style="position:absolute;left:0;top:0">
<g transform="translate(-.8 -1.3)"><path d="M47 19.4H65.4M32.8 33.4V61.6H64.6" fill="none" stroke="#e4e4e4" stroke-width="1"/>
<path d="M50.6 42L63.6 29.4L69.6 35.6L56.6 48.2Z" fill="#e0468c"/><path d="M49.6 43.2L55.4 49.2L47.6 50.6Z" fill="#e0468c"/><path d="M64.8 28.2L67 26Q68.2 25 69.4 26L73.2 29.8Q74.2 31 73.2 32.2L70.8 34.4Z" fill="#e0468c"/></g>
</svg></div></div>

<div class="th" style="left:333.5px;top:483.5px;width:80px;height:118.5px;"><div class="poster">
<svg width="69" height="108" viewBox="0 0 69 108" style="position:absolute;left:0;top:0">
<g fill="#c9452f"><path d="M9.4 3L11.4 2.6V23H9.4ZM12.6 3.4L14.4 3V22.4H12.6ZM57.6 2.6L59.6 3V23H57.6ZM54.6 3L56.4 3.4V22.4H54.6Z"/>
<path d="M15.6 2.2Q26 2.4 34.5 8.8Q43 2.4 53.4 2.2V19.6L51 17.6L49.4 20.4L47.6 16.6L45.6 20.6L43.8 17.4L41.8 21L40 18L38 21.6L36.2 17.8L34.4 21.4L32.4 18.2L30.6 21.6L28.8 17.4L26.8 20.8L25 18.2L23 21L21.2 17.6L19.2 20.6L17.4 18.4L15.6 19.6Z"/></g>
<path d="M51 65.6L54 67.8L57.6 66.6L58.6 70L62.2 71L61 74.6L63.4 77.4L60.6 80L61.2 83.6L57.6 84.2L56 87.6L52.6 86L49.4 88L47.4 84.8L43.8 84.6L43.8 81L40.8 78.8L43 75.8L41.6 72.4L45 71L45.8 67.4L49.4 68Z" fill="#1d1a1c"/>
<path d="M18 95Q17 91 21 91.4Q22 88.4 25.4 89.8Q27.4 87 30.6 89Q33.4 86.6 36 88.8Q39.6 86.4 42 89Q45.4 87 47.4 89.6Q51 88 52.6 90.6Q56.6 89.6 57.4 92.6Q60.6 93.4 59.4 96.4Q61 99.4 57.6 100.4Q56.4 103.4 53 102Q50.6 104.6 47.6 102.6Q44.6 105 42 102.8Q38.6 105 36 102.8Q33 105 30.4 102.8Q27.4 104.8 25 102.6Q21.4 104 20.4 101Q16.8 100.6 18 97.4Q16.6 96 18 95Z" fill="#fff" stroke="#1d1a1c" stroke-width=".9"/>
<path d="M24 95H54M26 98.4H52" stroke="#1d1a1c" stroke-width="1.2" stroke-dasharray="3 1 5 1"/>
<circle cx="8.8" cy="96.8" r="3.3" fill="none" stroke="#1d1a1c" stroke-width="1.8"/>
</svg>
<span class="p1">Reader Riot</span><span class="p2">BOOK</span><span class="p6">festival</span><span class="p3">2017</span><span class="p4">APRIL<br>28-29</span><span class="p5">FLORENCE, AL</span>
</div></div>

<div class="txtdoc" style="left:565px;top:483.5px;">
<svg width="100" height="128" viewBox="-4 -3 100 128" style="position:absolute;left:-4px;top:-3px">
<defs><linearGradient id="curl" x1=".1" y1="0" x2=".75" y2=".9"><stop offset="0" stop-color="#f4f4f4"/><stop offset=".35" stop-color="#d4d4d6"/><stop offset=".7" stop-color="#ededee"/><stop offset="1" stop-color="#ffffff"/></linearGradient>
<linearGradient id="pg" x1="0" y1="0" x2="1" y2="0"><stop offset="0" stop-color="#fff"/><stop offset=".7" stop-color="#fdfdfd"/><stop offset="1" stop-color="#efefef"/></linearGradient></defs>
<path d="M1.4 1H48.5Q56 1 61 4.4L84 31Q90.5 39 91.4 46V117.4Q91.4 118.4 90.4 118.4H2.4Q1.4 118.4 1.4 117.4Z" fill="#666" opacity=".5" filter="url(#fsh)" transform="translate(0 1.8)"/>
<path d="M0.8 0H48.5Q56 0 61 3.4L84 30Q90.5 38 91.4 45V117.6Q91.4 118.6 90.4 118.6H1.8Q0.8 118.6 0.8 117.6Z" fill="url(#pg)" stroke="#c6c6c8" stroke-width=".8"/>
<path d="M48.5 0C56 4 59 14 59.4 27.4C70 25 82 30 91.4 45Q90.5 38 84 30L61 3.4Q56 0 48.5 0Z" fill="url(#curl)" stroke="#d2d2d4" stroke-width=".5"/>
<path d="M59.4 27.4C70 25 82 30 91.4 45V58C84 40 72 31 59.4 29.4Z" fill="#e9e9eb" opacity=".55"/>
<g stroke="#8a8a8e" stroke-width=".9" stroke-dasharray="5 .7 3 .5 7 .6 2 .5" opacity=".8">
<path d="M6 5.6H24M6 9.4H57M6 11.6H57M6 13.8H56M6 16H30M6 18.4H28M6 22.6H13M6 26.2H52M6 28.4H56M6 30.6H48M6 34H12M6 36.4H59M6 38.6H40M6 42.4H13M6 46H59M6 48.2H36M6 51.6H59M6 53.8H52M6 57.4H13M6 61H56M6 63.2H50M6 66.6H59M6 68.8H59M6 71H59M6 73.2H22M6 76.4H59M6 78.6H52M6 82.6H13M6 86.2H59M6 88.4H59M6 90.6H44M6 94.2H59M6 96.4H50M6 99.6H13M6 102H30M6 104.2H26"/></g>
</svg>
<span class="txt">TXT</span></div>

<div class="th" style="left:808.5px;top:483.5px;width:82.5px;height:118.5px;"><div class="orange">
<svg width="72" height="108" viewBox="0.8 0 72 108" style="position:absolute;left:0;top:0">
<path d="M3.6 24.6L5.2 23.4L8 24.2L8.6 27.6Q9.4 28.4 10 27.4L10.4 24L13.6 23.8L14.4 26Q15 26.6 15.4 25.8L16 23.6L20.6 23.6L21.4 28Q22.4 29.2 23.4 28L24 24L27.4 22.6L31.6 25.2L35.4 22.8L38.6 23.6L41 24L41.4 27Q42 27.6 42.6 26.8L43.2 24.6L46.6 24.4L49.6 22.8L52.6 24.2L56 23L58.8 24.6L60.6 22.2L65.6 22.4L68.6 24.6L68 30L69.2 35L67.6 40L69 46L67.4 52L69.2 58L67.6 64L69 70L67.6 76L68.8 82L67 87.2L62 88L57 86.6L52 88.2L47 87.2L41.6 88.8L36.6 87L31 86.6L26 88L21 86.8L16 88.4L11 87.2L6 88.4L3.8 86L4.8 80L3 74L4.6 68L3 62L4.4 56L2.8 50L4.6 44L2.6 38L4.2 32Z" fill="#fff"/>
</svg></div></div>


</div>
</div>
</body>
</html>
